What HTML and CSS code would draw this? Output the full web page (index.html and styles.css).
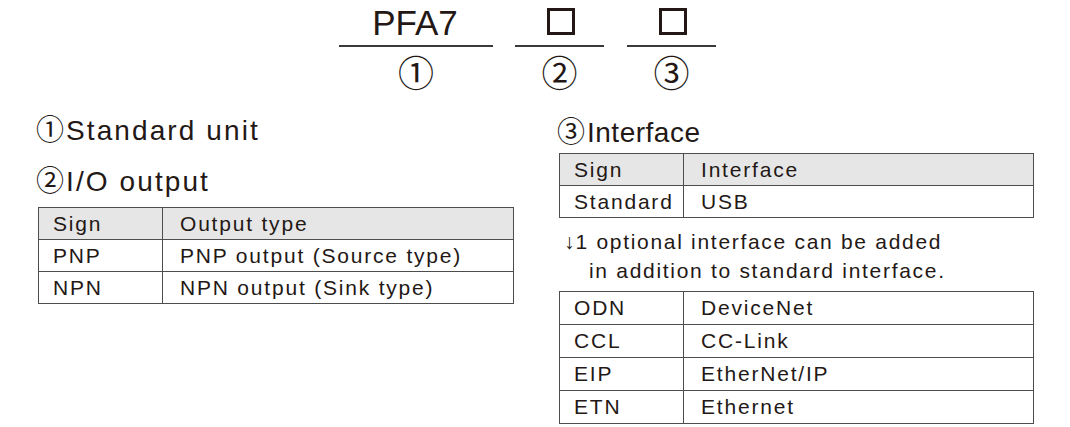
FILE: index.html
```html
<!DOCTYPE html>
<html lang="en">
<head>
<meta charset="utf-8">
<title>PFA7 model code</title>
<link rel="stylesheet" href="styles.css">
</head>
<body>
<div class="page">
  <div class="code">
    <div class="seg seg-main">
      <div class="seg-top"><span class="model">PFA7</span></div>
      <div class="seg-line"></div>
      <div class="seg-num">①</div>
    </div>
    <div class="seg seg-opt">
      <div class="seg-top"><span class="box" aria-label="□"></span></div>
      <div class="seg-line"></div>
      <div class="seg-num">②</div>
    </div>
    <div class="seg seg-opt">
      <div class="seg-top"><span class="box" aria-label="□"></span></div>
      <div class="seg-line"></div>
      <div class="seg-num">③</div>
    </div>
  </div>

  <div class="columns">
    <div class="col col-left">
      <h2 class="heading h-first"><span class="circ">①</span>Standard unit</h2>
      <h2 class="heading h-second"><span class="circ">②</span>I/O output</h2>
      <table class="spec spec-left">
        <tr class="head"><td class="c1">Sign</td><td class="c2">Output type</td></tr>
        <tr><td class="c1">PNP</td><td class="c2">PNP output (Source type)</td></tr>
        <tr><td class="c1">NPN</td><td class="c2">NPN output (Sink type)</td></tr>
      </table>
    </div>
    <div class="col col-right">
      <h2 class="heading h-third"><span class="circ">③</span>Interface</h2>
      <table class="spec">
        <tr class="head"><td class="c1">Sign</td><td class="c2">Interface</td></tr>
        <tr><td class="c1">Standard</td><td class="c2">USB</td></tr>
      </table>
      <p class="note"><span class="l1"><span class="arrow">↓</span>1 optional interface can be added</span><span class="l2">in addition to standard interface.</span></p>
      <table class="spec spec-opt">
        <tr><td class="c1">ODN</td><td class="c2">DeviceNet</td></tr>
        <tr><td class="c1">CCL</td><td class="c2">CC-Link</td></tr>
        <tr><td class="c1">EIP</td><td class="c2">EtherNet/IP</td></tr>
        <tr><td class="c1">ETN</td><td class="c2">Ethernet</td></tr>
      </table>
    </div>
  </div>
</div>
</body>
</html>
```

FILE: styles.css
```css
html, body {
  margin: 0;
  padding: 0;
  background: #ffffff;
}

body {
  font-family: "Liberation Sans", Arial, sans-serif;
  color: #231815;
  width: 1070px;
  height: 427px;
  overflow: hidden;
}

/* model code */
.code {
  display: flex;
  padding-left: 339px;
  gap: 22px;
}

.seg {
  display: flex;
  flex-direction: column;
  align-items: stretch;
}

.seg-main { width: 154px; }
.seg-opt { width: 89px; }
.seg-opt + .seg-opt { margin-left: 1px; }

.seg-top {
  height: 45px;
  display: flex;
  justify-content: center;
  align-items: flex-start;
}

.model {
  font-size: 35px;
  line-height: 40px;
  margin-top: 3px;
  margin-right: 2px;
}

.box {
  display: block;
  width: 22px;
  height: 21px;
  border: 3px solid #231815;
  margin-top: 8px;
  margin-left: 2px;
}

.seg-line {
  height: 2px;
  background: #3a3a3a;
}

.seg-num {
  text-align: center;
  font-family: "Noto Sans CJK JP", sans-serif;
  font-size: 36px;
  line-height: 46px;
  margin-top: 1px;
}

/* columns */
.columns {
  display: flex;
  padding-left: 38px;
  gap: 45px;
}

.col-left { width: 476px; }
.col-right { width: 475px; }

.heading {
  margin: 0;
  font-weight: normal;
  font-size: 28px;
  line-height: 32px;
  height: 32px;
  letter-spacing: 2.1px;
  white-space: nowrap;
}

.circ {
  font-family: "Noto Sans CJK JP", sans-serif;
  font-size: 28px;
  line-height: 0;
  letter-spacing: 0;
  margin-left: -2px;
  margin-right: 2px;
}

.h-first { margin-top: 21px; }
.h-second { margin-top: 19px; margin-bottom: 9px; }
.h-third {
  margin-top: 23px;
  margin-bottom: 4px;
  letter-spacing: 0.5px;
}

/* tables */
.spec {
  border-collapse: collapse;
  width: 100%;
  font-size: 21px;
  letter-spacing: 1.8px;
}

.spec td {
  border: 1px solid #4d4d4d;
  height: 31px;
  padding: 0;
  vertical-align: middle;
  white-space: nowrap;
}

.spec-opt td {
  height: 32px;
}

.spec .c1 {
  width: 109px;
  padding-left: 14px;
}

.spec .c2 {
  padding-left: 17px;
}

.spec tr.head td {
  background: #e6e6e6;
}

.note {
  margin: 9px 0 6px 0;
  font-size: 21px;
  line-height: 29px;
  letter-spacing: 1.7px;
}

.note .l1 {
  display: block;
  padding-left: 5px;
}

.note .l2 {
  display: block;
  padding-left: 30px;
}

.arrow {
  letter-spacing: 0;
  margin-right: 1px;
}
```
